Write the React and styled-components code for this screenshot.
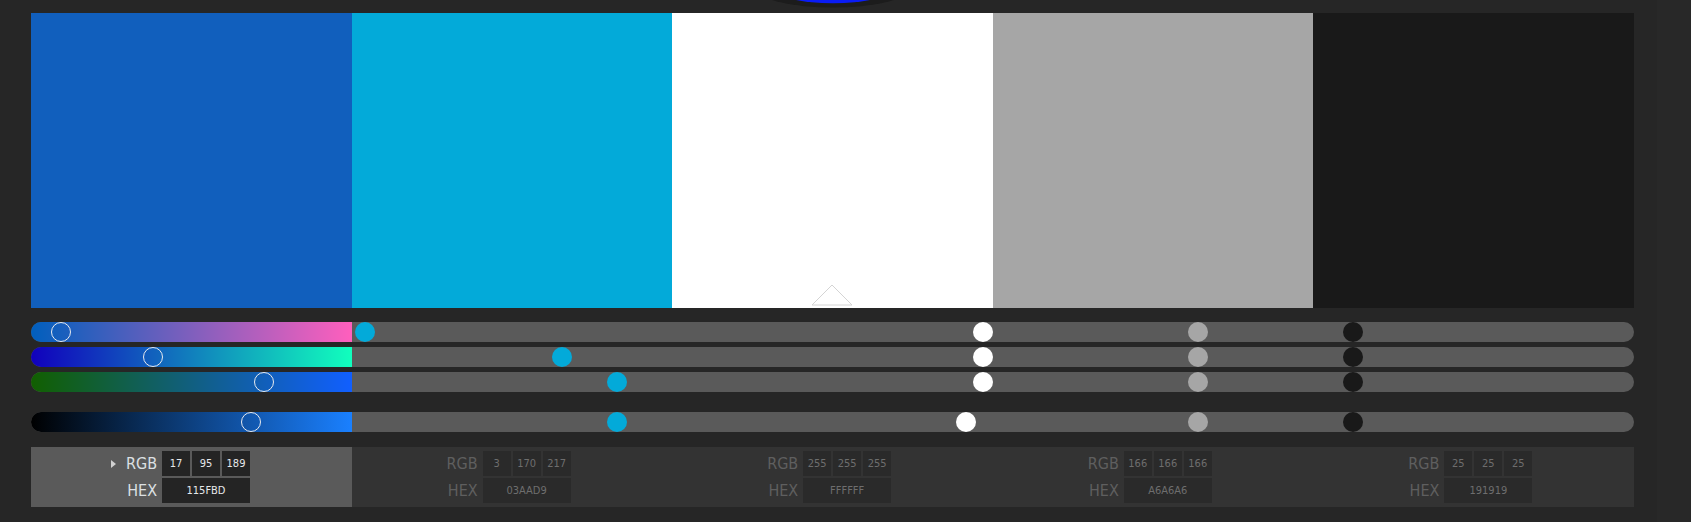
import React from "react";
import styled, { createGlobalStyle } from "styled-components";

const GlobalStyle = createGlobalStyle`
  html, body { margin: 0; padding: 0; background: #262626; }
  body { width: 1691px; height: 522px; overflow: hidden; font-family: "Liberation Sans Narrow", "DejaVu Sans Condensed", "Liberation Sans", sans-serif; }
`;

const swatches = [
  { hex: "115FBD", rgb: [17, 95, 189], css: "#115FBD", bright: 178 },
  { hex: "03AAD9", rgb: [3, 170, 217], css: "#03AAD9", bright: 217 },
  { hex: "FFFFFF", rgb: [255, 255, 255], css: "#FFFFFF", bright: 241 },
  { hex: "A6A6A6", rgb: [166, 166, 166], css: "#A6A6A6", bright: 166 },
  { hex: "191919", rgb: [25, 25, 25], css: "#191919", bright: 25 },
];

const ACTIVE = 0;

const sliders = [
  { key: "r", gap: false, grad: "linear-gradient(to right, rgb(0,95,189), rgb(255,95,189))", value: (s) => s.rgb[0] },
  { key: "g", gap: false, grad: "linear-gradient(to right, rgb(17,0,189), rgb(17,255,189))", value: (s) => s.rgb[1] },
  { key: "b", gap: false, grad: "linear-gradient(to right, rgb(17,95,0), rgb(17,95,255))", value: (s) => s.rgb[2] },
  { key: "v", gap: true, grad: "linear-gradient(to right, #000000, #1a80ff)", value: (s) => s.bright },
];

const Page = styled.div`
  position: relative;
  display: flex;
  height: 522px;
`;

const Main = styled.div`
  width: 1603px;
  padding: 13px 0 0 31px;
  display: flex;
  flex-direction: column;
`;

const SidePanel = styled.div`
  flex: 1;
  margin-left: 23px;
  background: #282828;
`;

const WheelTip = styled.svg`
  position: absolute;
  top: 0;
  left: 763px;
`;

const SwatchRow = styled.div`
  display: flex;
  height: 295px;
`;

const Swatch = styled.div`
  position: relative;
  flex: 1;
  background: ${(p) => p.$color};
`;

const Marker = styled.svg`
  position: absolute;
  left: 50%;
  bottom: 2px;
  transform: translateX(-50%);
`;

const SliderStack = styled.div`
  display: flex;
  flex-direction: column;
  gap: 5px;
  margin-top: 14px;
`;

const Track = styled.div`
  display: flex;
  height: 20px;
  border-radius: 10px;
  background: #5a5a5a;
  overflow: hidden;
  margin-top: ${(p) => (p.$spaced ? "15px" : "0")};
`;

const Segment = styled.div`
  position: relative;
  flex: 1;
  background: ${(p) => p.$grad || "transparent"};
`;

const Handle = styled.div`
  position: absolute;
  top: 0;
  width: 20px;
  height: 20px;
  box-sizing: border-box;
  border-radius: 50%;
  transform: translateX(-50%);
  background: ${(p) => (p.$hollow ? "transparent" : p.$color)};
  border: ${(p) => (p.$hollow ? "1.5px solid #e8eaee" : "none")};
`;

const Panel = styled.div`
  display: flex;
  margin-top: 15px;
  height: 60px;
`;

const Column = styled.div`
  flex: 1;
  background: ${(p) => (p.$active ? "#5a5a5a" : "#333333")};
  display: grid;
  grid-template-columns: 126px 88px;
  grid-auto-rows: 25px;
  column-gap: 5px;
  row-gap: 2px;
  padding-top: 4px;
  align-content: start;
`;

const Label = styled.div`
  display: flex;
  align-items: center;
  justify-content: flex-end;
  gap: 10px;
  font-size: 16px;
  color: ${(p) => (p.$active ? "#dde0e3" : "#5f5f5f")};
`;

const Caret = styled.span`
  width: 0;
  height: 0;
  border-top: 4.5px solid transparent;
  border-bottom: 4.5px solid transparent;
  border-left: 5px solid #d0d0d0;
`;

const BoxGroup = styled.div`
  display: flex;
  gap: 2px;
`;

const Box = styled.div`
  flex: 1;
  display: flex;
  align-items: center;
  justify-content: center;
  font-size: 11px;
  background: ${(p) => (p.$active ? "#242424" : "#2a2a2a")};
  color: ${(p) => (p.$active ? "#e6e8ea" : "#6e6e6e")};
`;

function handlePos(v) {
  return `calc(10px + ${v / 255} * (100% - 20px))`;
}

export default function App() {
  return (
    <>
      <GlobalStyle />
      <Page>
        <WheelTip width="140" height="10" viewBox="0 0 140 10">
          <defs>
            <linearGradient id="blueTip" x1="0" x2="1" y1="0" y2="0">
              <stop offset="0%" stopColor="#5a4fd0" />
              <stop offset="15%" stopColor="#0a1cf5" />
              <stop offset="85%" stopColor="#0a1cf5" />
              <stop offset="100%" stopColor="#5a4fd0" />
            </linearGradient>
          </defs>
          <ellipse cx="70" cy="-10" rx="74" ry="17.5" fill="#1c1c1c" />
          <ellipse cx="70" cy="-10" rx="56" ry="13.3" fill="url(#blueTip)" />
        </WheelTip>
        <Main>
          <SwatchRow>
            {swatches.map((s, i) => (
              <Swatch key={s.hex} $color={s.css}>
                {i === 2 && (
                  <Marker width="42" height="22" viewBox="0 0 42 22">
                    <polygon points="21,1 1,21 41,21" fill="#ffffff" stroke="#d4d4d4" strokeWidth="1" />
                  </Marker>
                )}
              </Swatch>
            ))}
          </SwatchRow>
          <SliderStack>
            {sliders.map((sl) => (
              <Track key={sl.key} $spaced={sl.gap}>
                {swatches.map((s, i) => (
                  <Segment key={s.hex} $grad={i === ACTIVE ? sl.grad : null}>
                    <Handle
                      $hollow={i === ACTIVE}
                      $color={s.css}
                      style={{ left: handlePos(sl.value(s)) }}
                    />
                  </Segment>
                ))}
              </Track>
            ))}
          </SliderStack>
          <Panel>
            {swatches.map((s, i) => {
              const active = i === ACTIVE;
              return (
                <Column key={s.hex} $active={active}>
                  <Label $active={active}>
                    {active && <Caret />}
                    RGB
                  </Label>
                  <BoxGroup>
                    {s.rgb.map((c, j) => (
                      <Box key={j} $active={active}>{c}</Box>
                    ))}
                  </BoxGroup>
                  <Label $active={active}>HEX</Label>
                  <BoxGroup>
                    <Box $active={active}>{s.hex}</Box>
                  </BoxGroup>
                </Column>
              );
            })}
          </Panel>
        </Main>
        <SidePanel />
      </Page>
    </>
  );
}
